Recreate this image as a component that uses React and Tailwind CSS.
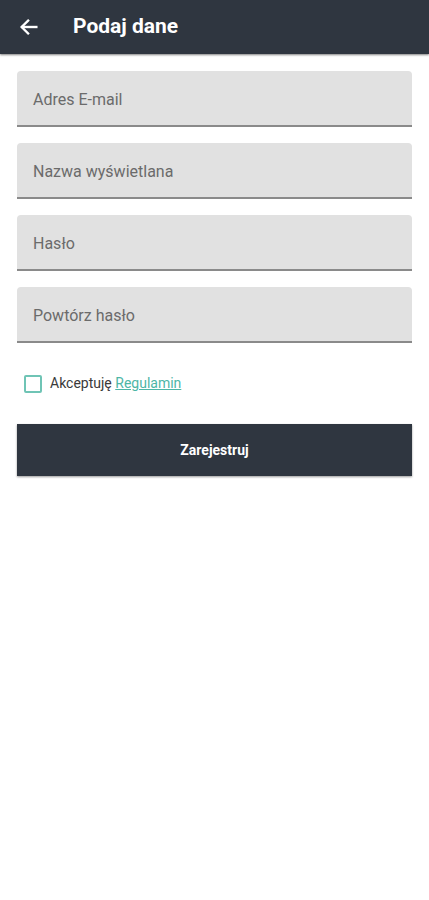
export default function App() {
  const fields = ["Adres E-mail", "Nazwa wyświetlana", "Hasło", "Powtórz hasło"]

  return (
    <div className="min-h-[900px] bg-white" style={{ fontFamily: "Roboto, sans-serif" }}>
      {/* Toolbar */}
      <header className="flex h-[54px] items-center bg-[#2f3640] px-[18px] shadow-[0_1px_2px_rgba(0,0,0,0.5)]">
        <svg width="22" height="22" viewBox="0 0 24 24" fill="none" stroke="white" strokeWidth="2.6" strokeLinecap="square">
          <path d="M20 12H5" />
          <path d="M11 5l-7 7 7 7" />
        </svg>
        <h1 className="ml-[33px] text-[21px] font-bold text-white">Podaj dane</h1>
      </header>

      <main className="px-[17px] pt-[17px]">
        <div className="flex flex-col gap-[16px]">
          {fields.map((f) => (
            <div
              key={f}
              className="flex h-[56px] items-center rounded-t-[4px] border-b-2 border-[#8a8a8a] bg-[#e1e1e1] px-[16px] pt-[3px] text-[16px] text-[#6b6b6b]"
            >
              {f}
            </div>
          ))}
        </div>

        <div className="mt-[30px] flex items-center pl-[7px]">
          <span className="h-[18px] w-[18px] rounded-[2px] border-2 border-[#6fc4b5]" />
          <span className="ml-[8px] text-[14px] text-[#3a3a3a]">
            Akceptuję <span className="text-[#4db6a6] underline">Regulamin</span>
          </span>
        </div>

        <button className="mt-[30px] flex h-[52px] w-full items-center justify-center bg-[#2f3640] text-[14px] font-bold text-white shadow-[0_1px_2px_rgba(0,0,0,0.4)]">
          Zarejestruj
        </button>
      </main>
    </div>
  )
}
